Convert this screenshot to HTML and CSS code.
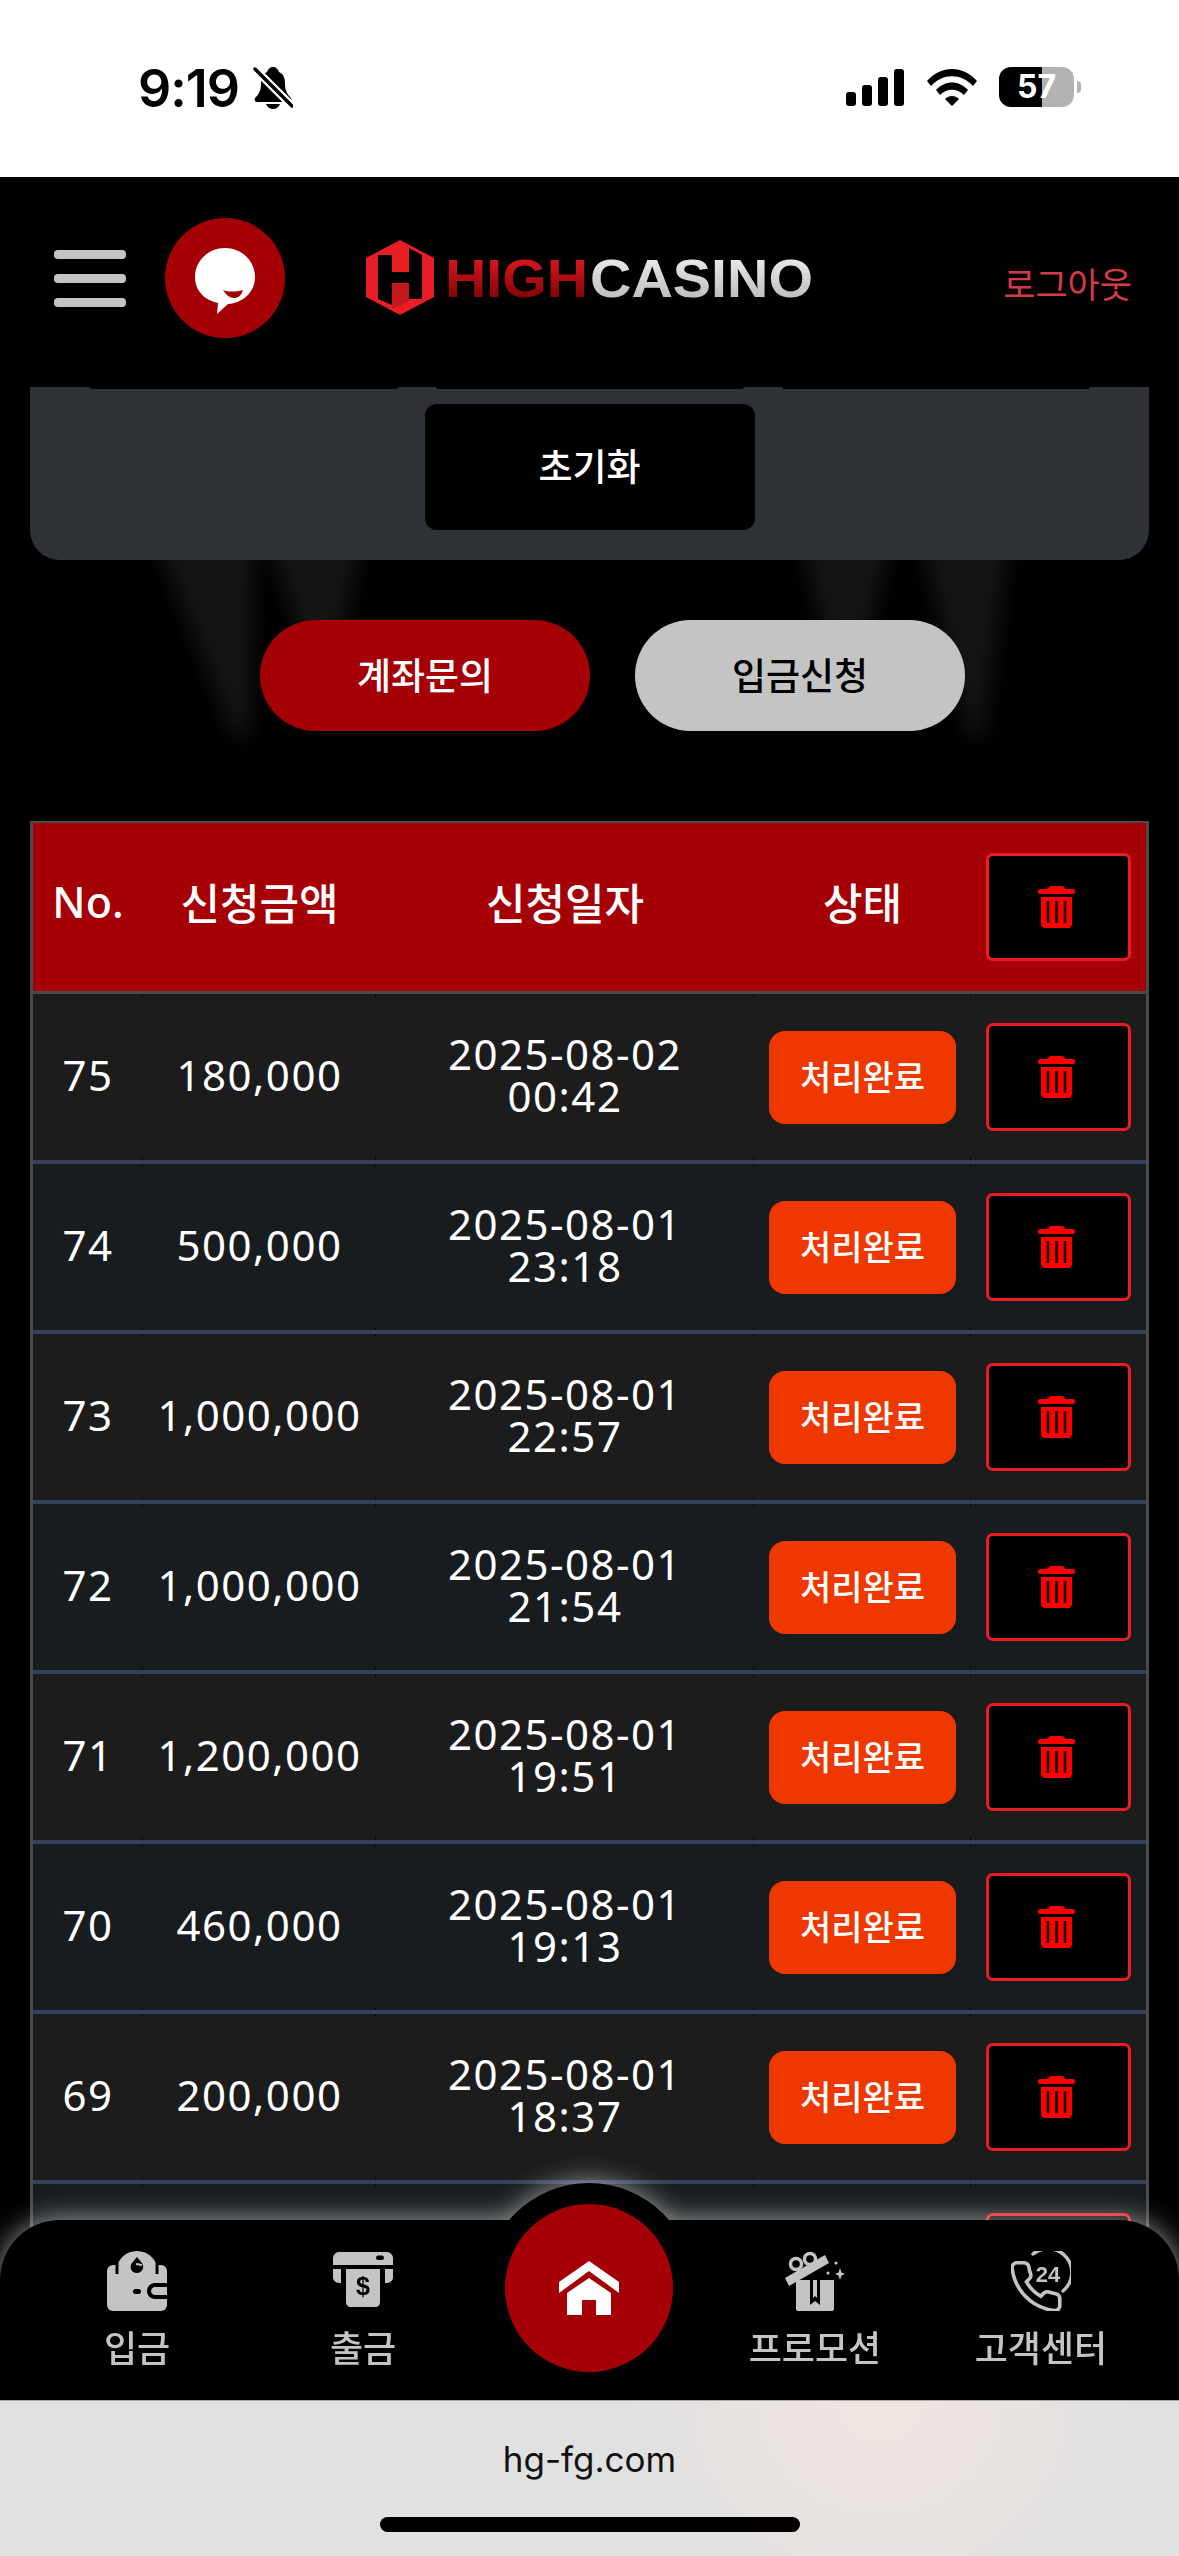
FILE: index.html
```html
<!DOCTYPE html>
<html lang="ko">
<head>
    <meta charset="UTF-8">
    <meta name="viewport" content="width=device-width, initial-scale=1.0">
    <title>HIGH CASINO - 입금</title>
    <link rel="stylesheet" href="styles.css">
</head>
<body>
    <div class="status-bar">
        <div class="status-left">
            <span class="clock">9:19</span>
            <svg class="bell" viewBox="0 0 40 42">
                <path d="M20 0c3 0 5 2 6 5 5 2 6 7 6 12 0 6 2 10 6 14 1 2 0 4-2 4H4c-2 0-3-2-2-4 4-4 6-8 6-14 0-5 1-10 6-12 1-3 3-5 6-5z"/>
                <path d="M13 37h14c-1 3-4 5-7 5s-6-2-7-5z"/>
                <path d="M1 1l38 38" stroke="#fff" stroke-width="8"/>
                <path d="M2 2l37 37" stroke="#000" stroke-width="3.4" stroke-linecap="round"/>
            </svg>
        </div>
        <div class="status-right">
            <svg class="signal" viewBox="0 0 58 37">
                <rect x="0" y="23" width="10" height="14" rx="3"/>
                <rect x="16" y="16" width="10" height="21" rx="3"/>
                <rect x="32" y="8" width="10" height="29" rx="3"/>
                <rect x="48" y="0" width="10" height="37" rx="3"/>
            </svg>
            <svg class="wifi" viewBox="0 0 50 37">
                <path d="M0 12C14-4 36-4 50 12l-4 5C34 4 16 4 4 17z"/>
                <path d="M9 21c9-10 23-10 32 0l-4 5c-7-7-17-7-24 0z"/>
                <path d="M18 30c4-4 10-4 14 0l-7 7z"/>
            </svg>
            <div class="battery"><span>57</span></div>
            <div class="battery-nub"></div>
        </div>
    </div>

    <div class="top-bar">
        <div class="hamburger"><span></span><span></span><span></span></div>
        <div class="chat-btn">
            <svg viewBox="0 0 60 66" width="60" height="66">
                <path d="M30 0c17 0 30 13 30 29 0 15-12 26-27 27l-11 10 1-11C9 52 0 42 0 29 0 13 13 0 30 0z" fill="#fff"/>
                <path d="M28 42c5 2 12 2 20 0-2 6-5 8-9 8s-8-3-11-8z" fill="#a50005"/>
            </svg>
        </div>
        <svg class="logo" viewBox="0 0 450 76" width="450" height="76">
            <defs>
                <linearGradient id="redText" x1="0" y1="0" x2="0" y2="1">
                    <stop offset="0" stop-color="#ee1c25"/>
                    <stop offset="1" stop-color="#6d0000"/>
                </linearGradient>
                <linearGradient id="whiteText" x1="0" y1="0" x2="0" y2="1">
                    <stop offset="0" stop-color="#f4f4f4"/>
                    <stop offset="1" stop-color="#b4b4b4"/>
                </linearGradient>
            </defs>
            <path d="M34 0l34 18v39L34 75 0 57V18z" fill="#e81d26"/>
            <path d="M12 15h14v17h17V8l13 7v44H43V43H26v22l-14-6z" fill="#000"/>
            <path d="M26 32V15L43 6v26z" fill="#e81d26"/>
            <path d="M26 43h17v18l-17 8z" fill="#c4161d"/>
            <text class="logo-text" x="79" y="57" fill="url(#redText)" textLength="143" lengthAdjust="spacingAndGlyphs">HIGH</text>
            <text class="logo-text" x="224" y="57" fill="url(#whiteText)" textLength="223" lengthAdjust="spacingAndGlyphs">CASINO</text>
        </svg>
        <a class="logout">로그아웃</a>
    </div>

    <div class="page">
        <div class="beam beam-a"></div>
        <div class="beam beam-b"></div>
        <div class="beam beam-c"></div>
        <div class="beam beam-d"></div>

        <div class="content">
            <div class="filter-panel">
                <div class="input-ends"><span></span><span></span><span></span></div>
                <button class="reset-btn">초기화</button>
            </div>

            <div class="tabs">
                <button class="tab tab-active">계좌문의</button>
                <button class="tab">입금신청</button>
            </div>

            <table class="history">
                <colgroup>
                    <col class="col-no"><col class="col-amount"><col class="col-date"><col class="col-state"><col class="col-del">
                </colgroup>
                <thead>
                    <tr>
                        <th>No.</th>
                        <th>신청금액</th>
                        <th>신청일자</th>
                        <th>상태</th>
                        <th><button class="del-btn"><svg viewBox="0 0 37 42"><use href="#trash"/></svg></button></th>
                    </tr>
                </thead>
                <tbody id="rows"></tbody>
            </table>
        </div>

        <nav class="bottom-nav">
            <a class="nav-item">
                <svg class="nav-icon" viewBox="0 0 60 60">
                    <circle cx="30" cy="21" r="21" fill="#c4c4c4"/>
                    <rect x="0" y="14" width="60" height="46" rx="6" fill="#c4c4c4"/>
                    <path d="M10 12v11M50 12v11" stroke="#000" stroke-width="3"/>
                    <path d="M30 6l5 6c3 4 0 10-5 10-6 0-8-6-5-10z" fill="#000"/>
                    <path d="M29 13l6 1" stroke="#c4c4c4" stroke-width="2"/>
                    <rect x="26" y="38" width="8" height="5" rx="2.5" fill="#000"/>
                    <path d="M60 32H48c-5 0-8 4-8 8s3 8 8 8h12z" fill="#000"/>
                    <path d="M60 36H48c-2 0-4 2-4 4s2 4 4 4h12z" fill="#c4c4c4"/>
                </svg>
                <span>입금</span>
            </a>
            <a class="nav-item">
                <svg class="nav-icon" viewBox="0 0 60 60">
                    <path d="M6 1h48c3 0 6 3 6 6v7H0V7c0-3 3-6 6-6z" fill="#c4c4c4"/>
                    <rect x="43" y="4.500" width="8" height="4.500" rx="2.200" fill="#000"/>
                    <path d="M0 18h8v14c-5 0-8-2-8-6z" fill="#c4c4c4"/>
                    <path d="M60 18h-8v14c5 0 8-2 8-6z" fill="#c4c4c4"/>
                    <path d="M13 18h34v33c0 3-2 5-5 5H18c-3 0-5-2-5-5z" fill="#c4c4c4"/>
                    <text class="dollar" x="30" y="44" text-anchor="middle">$</text>
                </svg>
                <span>출금</span>
            </a>
            <a class="nav-home">
                <span class="home-circle">
                    <svg viewBox="0 0 62 54" width="62" height="54">
                        <path d="M31 0l30 21v11L31 10 1 32V21z" fill="#fff"/>
                        <path d="M31 17l22 15v22H38V39H24v15H9V32z" fill="#fff"/>
                    </svg>
                </span>
            </a>
            <a class="nav-item">
                <svg class="nav-icon" viewBox="0 0 60 60">
                    <path d="M11 29h38v29c0 1-1 2-2 2H13c-1 0-2-1-2-2z" fill="#c4c4c4"/>
                    <path d="M25 29h10v25l-5-4-5 4z" fill="#000"/>
                    <path d="M28 29h4v18l-2-2-2 2z" fill="#c4c4c4"/>
                    <path d="M0 27L40 4l4 8L4 35z" fill="#c4c4c4"/>
                    <circle cx="11" cy="13" r="5.500" fill="none" stroke="#c4c4c4" stroke-width="3.500"/>
                    <circle cx="25" cy="8" r="5.500" fill="none" stroke="#c4c4c4" stroke-width="3.500"/>
                    <path d="M55 17l1.500 4.500L60 23l-3.500 1.500L55 29l-1.500-4.500L50 23l3.500-1.500z" fill="#c4c4c4"/>
                    <circle cx="51" cy="12" r="1.600" fill="#c4c4c4"/>
                    <circle cx="43" cy="22" r="1.600" fill="#c4c4c4"/>
                </svg>
                <span>프로모션</span>
            </a>
            <a class="nav-item">
                <svg class="nav-icon" viewBox="0 0 60 60">
                    <path d="M22 3a23.500 23.500 0 0 1 30 37" fill="none" stroke="#c4c4c4" stroke-width="3.500" stroke-linecap="round"/>
                    <text class="hotline" x="37" y="31" text-anchor="middle">24</text>
                    <g transform="translate(-4 7) scale(2.400)">
                        <path d="M22 16.920v3a2 2 0 0 1-2.180 2 19.790 19.790 0 0 1-8.630-3.070 19.500 19.500 0 0 1-6-6 19.790 19.790 0 0 1-3.070-8.670A2 2 0 0 1 4.110 2h3a2 2 0 0 1 2 1.720 12.840 12.840 0 0 0 .7 2.810 2 2 0 0 1-.45 2.110L8.090 9.910a16 16 0 0 0 6 6l1.270-1.270a2 2 0 0 1 2.110-.45 12.840 12.840 0 0 0 2.810.7A2 2 0 0 1 22 16.920z" fill="none" stroke="#c4c4c4" stroke-width="1.500"/>
                    </g>
                </svg>
                <span>고객센터</span>
            </a>
        </nav>
    </div>

    <div class="browser-bar">
        <span class="url">hg-fg.com</span>
        <div class="home-indicator"></div>
    </div>

    <svg class="sprites" width="0" height="0">
        <symbol id="trash" viewBox="0 0 37 42">
            <path d="M13 0h11c1 0 3 1 3 3h8c1 0 2 1 2 2v1c0 1-1 2-2 2H2C1 8 0 7 0 6V5c0-1 1-2 2-2h8c0-2 2-3 3-3z" fill="#f00"/>
            <path d="M3 11h31v27c0 2-2 4-4 4H7c-2 0-4-2-4-4z" fill="#f00"/>
            <path d="M10 15v22M18.500 15v22M27 15v22" stroke="#000" stroke-width="2.500"/>
        </symbol>
    </svg>

    <script>
        (function() {
            // 입금 내역
            const deposits = [
                [75, '180,000', '2025-08-02', '00:42'],
                [74, '500,000', '2025-08-01', '23:18'],
                [73, '1,000,000', '2025-08-01', '22:57'],
                [72, '1,000,000', '2025-08-01', '21:54'],
                [71, '1,200,000', '2025-08-01', '19:51'],
                [70, '460,000', '2025-08-01', '19:13'],
                [69, '200,000', '2025-08-01', '18:37']
            ];
            const delBtn = '<button class="del-btn"><svg viewBox="0 0 37 42"><use href="#trash"/></svg></button>';
            let html = '';
            deposits.forEach(function(r) {
                html += '<tr><td>' + r[0] + '</td><td>' + r[1] + '</td>' +
                    '<td class="date">' + r[2] + '<br>' + r[3] + '</td>' +
                    '<td><span class="state">처리완료</span></td><td>' + delBtn + '</td></tr>';
            });
            // 하단 메뉴에 가려진 행
            html += '<tr><td></td><td></td><td></td><td></td><td>' + delBtn + '</td></tr>';
            document.getElementById('rows').innerHTML = html;
        })();
    </script>
</body>
</html>
```

FILE: styles.css
```css
* {
    margin: 0;
    padding: 0;
    box-sizing: border-box;
}

html, body {
    width: 1179px;
    height: 2556px;
    overflow: hidden;
}

body {
    display: flex;
    flex-direction: column;
    background: #000;
    font-family: "Noto Sans", "Noto Sans CJK KR", sans-serif;
    color: #fff;
}

button {
    font-family: inherit;
    border: none;
}

.sprites {
    position: absolute;
}

/* status bar */
.status-bar {
    height: 177px;
    flex: none;
    background: #fff;
    display: flex;
    justify-content: space-between;
    padding: 67px 98px 0 138px;
    color: #000;
}

.status-left {
    display: flex;
    align-items: flex-start;
    gap: 14px;
}

.clock {
    font-family: Inter, sans-serif;
    font-size: 52px;
    font-weight: 600;
    line-height: 44px;
    letter-spacing: -1px;
}

.bell {
    width: 40px;
    height: 42px;
}

.status-right {
    display: flex;
    align-items: flex-start;
}

.signal {
    width: 58px;
    height: 37px;
    margin-top: 2px;
    margin-right: 23px;
}

.wifi {
    width: 50px;
    height: 37px;
    margin-top: 2px;
    margin-right: 22px;
}

.battery {
    width: 75px;
    height: 40px;
    border-radius: 12px;
    background: linear-gradient(90deg, #000 57%, #b3b3b3 57%);
    color: #fff;
    font-family: Inter, sans-serif;
    font-size: 32px;
    font-weight: 700;
    line-height: 40px;
    text-align: center;
}

.battery-nub {
    width: 4px;
    height: 12px;
    margin: 14px 0 0 3px;
    border-radius: 0 6px 6px 0;
    background: #b3b3b3;
}

/* header */
.top-bar {
    height: 210px;
    flex: none;
    background: #000;
    display: flex;
    align-items: center;
    padding: 0 47px 8px 54px;
    position: relative;
    z-index: 3;
}

.hamburger {
    width: 72px;
    display: flex;
    flex-direction: column;
    gap: 15px;
    margin-right: 39px;
}

.hamburger span {
    height: 9px;
    border-radius: 4px;
    background: #c4c4c4;
}

.chat-btn {
    width: 120px;
    height: 120px;
    border-radius: 50%;
    background: #a50005;
    display: flex;
    align-items: center;
    justify-content: center;
    padding-top: 6px;
}

.logo {
    margin-left: 81px;
}

.logo-text {
    font-family: "Liberation Sans", sans-serif;
    font-size: 54px;
    font-weight: 700;
}

.logout {
    margin-left: auto;
    margin-top: 8px;
    font-size: 35px;
    color: #d43a48;
}

/* page */
.page {
    flex: 1;
    position: relative;
    overflow: hidden;
    background: #000;
}

/* faint light shapes behind the tabs */
.beam {
    position: absolute;
    top: 140px;
    filter: blur(10px);
}

.beam::before {
    content: "";
    display: block;
    height: 100%;
    background: #141414;
}

.beam-a {
    left: 150px;
    width: 105px;
    height: 210px;
}

.beam-a::before {
    clip-path: polygon(0 0, 100% 0, 95% 100%, 80% 100%);
}

.beam-b {
    left: 263px;
    width: 102px;
    height: 120px;
}

.beam-b::before {
    clip-path: polygon(0 0, 100% 0, 75% 100%, 40% 100%);
}

.beam-c {
    left: 797px;
    width: 98px;
    height: 120px;
}

.beam-c::before {
    clip-path: polygon(0 0, 100% 0, 70% 100%, 30% 100%);
}

.beam-d {
    left: 917px;
    width: 94px;
    height: 210px;
}

.beam-d::before {
    clip-path: polygon(0 0, 100% 0, 70% 100%, 55% 100%);
}

.content {
    position: relative;
    padding: 0 30px;
}

.filter-panel {
    height: 173px;
    background: #2e3136;
    border-radius: 0 0 30px 30px;
    display: flex;
    flex-direction: column;
    align-items: center;
}

.input-ends {
    display: flex;
    gap: 38px;
    height: 2px;
}

.input-ends span {
    width: 308px;
    background: #000;
    border-radius: 0 0 3px 3px;
}

.reset-btn {
    width: 330px;
    height: 126px;
    margin-top: 15px;
    border-radius: 12px;
    background: #000;
    color: #fff;
    font-size: 37px;
    font-weight: 500;
    padding-bottom: 4px;
}

.tabs {
    display: flex;
    justify-content: center;
    gap: 45px;
    margin-top: 60px;
    padding-left: 46px;
}

.tab {
    width: 330px;
    height: 111px;
    border-radius: 56px;
    background: #c4c4c4;
    color: #000;
    font-size: 37px;
    font-weight: 500;
    padding-bottom: 4px;
}

.tab-active {
    background: #a50005;
    color: #fff;
}

/* table */
.history {
    width: 1119px;
    margin-top: 90px;
    table-layout: fixed;
    border-collapse: separate;
    border-spacing: 0;
    border: 3px solid #4a4a4a;
    border-top-width: 2px;
    border-bottom: none;
}

.col-no { width: 110px; }
.col-amount { width: 233px; }
.col-date { width: 378px; }
.col-state { width: 217px; }
.col-del { width: 175px; }

.history th {
    height: 171px;
    background: #a50005;
    border-bottom: 3px solid #4a4a4a;
    font-size: 43px;
    font-weight: 500;
    text-align: center;
    padding-bottom: 12px;
}

.history th:last-child {
    padding-bottom: 0;
}

.history td {
    height: 170px;
    background-color: #1c1c1c;
    border-bottom: 4px solid #33415c;
    font-size: 42px;
    letter-spacing: 1.5px;
    text-align: center;
}

.history td:nth-child(-n+3) {
    padding-bottom: 5px;
}

/* dark ticks where the cell edges meet the row lines */
.history td:not(:last-child) {
    background-image: linear-gradient(#080808, #080808), linear-gradient(#080808, #080808);
    background-size: 1px 3px;
    background-position: right top, right bottom;
    background-repeat: no-repeat;
}

.history tr:nth-child(even) td {
    background-color: #191c1e;
}

.history td.date {
    line-height: 42px;
}

.state {
    display: inline-flex;
    align-items: center;
    justify-content: center;
    width: 187px;
    height: 93px;
    border-radius: 16px;
    background: #ee3800;
    font-size: 34px;
    font-weight: 500;
    letter-spacing: 0;
    padding-bottom: 4px;
}

.del-btn {
    display: inline-flex;
    align-items: center;
    justify-content: center;
    vertical-align: middle;
    width: 145px;
    height: 108px;
    background: #000;
    border: 3px solid #ed1c24;
    border-radius: 7px;
    padding-right: 4px;
}

.del-btn svg {
    width: 37px;
    height: 42px;
}

/* bottom nav */
.bottom-nav {
    position: absolute;
    left: 0;
    right: 0;
    bottom: 0;
    height: 180px;
    padding: 0 24px;
    background: #000;
    border-radius: 60px 60px 0 0;
    display: flex;
    filter: drop-shadow(0 0 14px rgba(255, 255, 255, 0.6));
}

.nav-item {
    width: 226px;
    padding-top: 31px;
    display: flex;
    flex-direction: column;
    align-items: center;
    color: #c4c4c4;
    font-size: 36px;
    font-weight: 500;
    line-height: 52px;
}

.nav-icon {
    width: 60px;
    height: 60px;
    margin-bottom: 12px;
}

.dollar {
    font-family: "Liberation Sans", sans-serif;
    font-size: 25px;
    font-weight: 700;
    fill: #000;
}

.hotline {
    font-family: "Liberation Sans", sans-serif;
    font-size: 22px;
    font-weight: 700;
    fill: #c4c4c4;
}

.nav-home {
    width: 210px;
    height: 210px;
    flex: none;
    margin: -37px 8px 0;
    border-radius: 50%;
    background: #000;
    display: flex;
    align-items: center;
    justify-content: center;
}

.home-circle {
    width: 168px;
    height: 168px;
    border-radius: 50%;
    background: #a50005;
    display: flex;
    align-items: center;
    justify-content: center;
}

/* safari bottom bar */
.browser-bar {
    height: 156px;
    flex: none;
    position: relative;
    z-index: 3;
    border-top: 1px solid #aaa;
    background:
        radial-gradient(ellipse 260px 240px at 880px 0, #f1e5e1 0%, rgba(241, 229, 225, 0) 100%),
        #e0e1e1;
    display: flex;
    flex-direction: column;
    align-items: center;
    color: #111;
}

.url {
    margin-top: 35px;
    font-family: Inter, sans-serif;
    font-size: 35px;
    line-height: 46px;
}

.home-indicator {
    width: 420px;
    height: 15px;
    margin-top: 35px;
    border-radius: 8px;
    background: #000;
}
```
